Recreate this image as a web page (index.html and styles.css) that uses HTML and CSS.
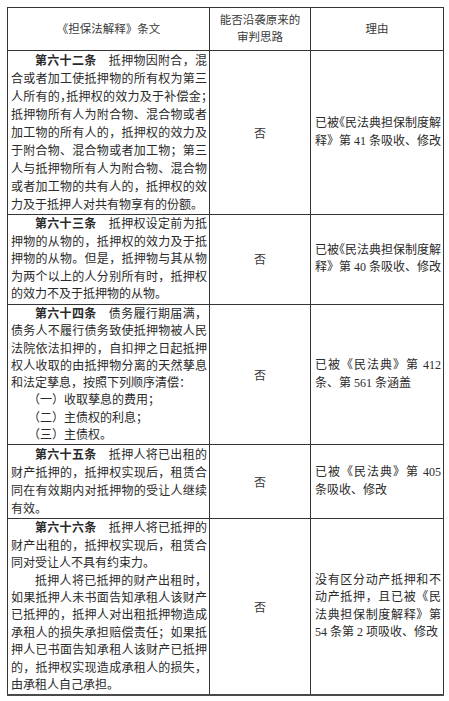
FILE: index.html
```html
<!DOCTYPE html>
<html lang="zh-CN">
<head>
<meta charset="utf-8">
<title>担保法解释条文对照</title>
<link rel="stylesheet" href="styles.css">
</head>
<body>
<table class="law">
<colgroup><col class="c1"><col class="c2"><col class="c3"></colgroup>
<thead>
<tr class="head">
<th>《担保法解释》条文</th>
<th>能否沿袭原来的<br>审判思路</th>
<th>理由</th>
</tr>
</thead>
<tbody>
<tr class="r1">
<td class="art">
<div class="ln ind"><b>第六十二条</b>　抵押物因附合，混</div>
<div class="ln">合或者加工使抵押物的所有权为第三</div>
<div class="ln halt">人所有的，抵押权的效力及于补偿金；</div>
<div class="ln">抵押物所有人为附合物、混合物或者</div>
<div class="ln">加工物的所有人的，抵押权的效力及</div>
<div class="ln">于附合物、混合物或者加工物；第三</div>
<div class="ln">人与抵押物所有人为附合物、混合物</div>
<div class="ln">或者加工物的共有人的，抵押权的效</div>
<div class="ln end">力及于抵押人对共有物享有的份额。</div>
</td>
<td class="ans">否</td>
<td class="why">
<div class="ln halt">已被《民法典担保制度解</div>
<div class="ln end">释》第 41 条吸收、修改</div>
</td>
</tr>
<tr class="r2">
<td class="art">
<div class="ln ind"><b>第六十三条</b>　抵押权设定前为抵</div>
<div class="ln">押物的从物的，抵押权的效力及于抵</div>
<div class="ln">押物的从物。但是，抵押物与其从物</div>
<div class="ln">为两个以上的人分别所有时，抵押权</div>
<div class="ln end">的效力不及于抵押物的从物。</div>
</td>
<td class="ans">否</td>
<td class="why">
<div class="ln halt">已被《民法典担保制度解</div>
<div class="ln end">释》第 40 条吸收、修改</div>
</td>
</tr>
<tr class="r3">
<td class="art">
<div class="ln ind"><b>第六十四条</b>　债务履行期届满，</div>
<div class="ln">债务人不履行债务致使抵押物被人民</div>
<div class="ln">法院依法扣押的，自扣押之日起抵押</div>
<div class="ln">权人收取的由抵押物分离的天然孳息</div>
<div class="ln end">和法定孳息，按照下列顺序清偿：</div>
<div class="ln end sub">（一）收取孳息的费用；</div>
<div class="ln end sub">（二）主债权的利息；</div>
<div class="ln end sub">（三）主债权。</div>
</td>
<td class="ans">否</td>
<td class="why">
<div class="ln">已被《民法典》第 412</div>
<div class="ln end">条、第 561 条涵盖</div>
</td>
</tr>
<tr class="r4">
<td class="art">
<div class="ln ind"><b>第六十五条</b>　抵押人将已出租的</div>
<div class="ln">财产抵押的，抵押权实现后，租赁合</div>
<div class="ln">同在有效期内对抵押物的受让人继续</div>
<div class="ln end">有效。</div>
</td>
<td class="ans">否</td>
<td class="why">
<div class="ln">已被《民法典》第 405</div>
<div class="ln end">条吸收、修改</div>
</td>
</tr>
<tr class="r5">
<td class="art">
<div class="ln ind"><b>第六十六条</b>　抵押人将已抵押的</div>
<div class="ln">财产出租的，抵押权实现后，租赁合</div>
<div class="ln end">同对受让人不具有约束力。</div>
<div class="ln ind">抵押人将已抵押的财产出租时，</div>
<div class="ln">如果抵押人未书面告知承租人该财产</div>
<div class="ln">已抵押的，抵押人对出租抵押物造成</div>
<div class="ln">承租人的损失承担赔偿责任；如果抵</div>
<div class="ln">押人已书面告知承租人该财产已抵押</div>
<div class="ln">的，抵押权实现造成承租人的损失，</div>
<div class="ln end">由承租人自己承担。</div>
</td>
<td class="ans">否</td>
<td class="why">
<div class="ln">没有区分动产抵押和不</div>
<div class="ln">动产抵押，且已被《民</div>
<div class="ln">法典担保制度解释》第</div>
<div class="ln end">54 条第 2 项吸收、修改</div>
</td>
</tr>
</tbody>
</table>
</body>
</html>
```

FILE: styles.css
```css
html, body {
  margin: 0;
  padding: 0;
  background: #ffffff;
}

body {
  font-family: "Liberation Serif", "Noto Sans CJK SC", serif;
  font-size: 12px;
  color: #2a2a2a;
}

.law {
  border-collapse: collapse;
  table-layout: fixed;
  width: 436px;
  margin: 7px 0 0 7px;
}

.c1 { width: 202px; }
.c2 { width: 101px; }
.c3 { width: 133px; }

.law th,
.law td {
  border: 1px solid #353535;
  padding: 0;
}

.law tbody tr:last-child td {
  border-bottom: 2px solid #4a4a4a;
}

.head th {
  height: 42px;
  font-family: "Liberation Sans", "Noto Sans CJK SC", sans-serif;
  font-weight: 400;
  font-size: 11.5px;
  line-height: 17px;
  color: #3a3a3a;
  text-align: center;
  vertical-align: middle;
}

.art {
  vertical-align: top;
  padding: 1px 2px 0 3px !important;
}

.ans {
  text-align: center;
  vertical-align: middle;
  color: #3a3a3a;
}

.why {
  vertical-align: middle;
  padding: 0 2px 0 4px !important;
  line-height: 17.5px;
}

.ln {
  white-space: nowrap;
  text-align: justify;
  text-align-last: justify;
}

.ln.end {
  text-align: left;
  text-align-last: left;
}

.ln.ind {
  padding-left: 24px;
}

.ln.sub {
  padding-left: 17px;
}

.halt {
  font-feature-settings: "halt";
}

.art b {
  font-weight: 700;
  color: #2a2a2a;
}

.r1 .art { line-height: 18px; }
.r2 .art { line-height: 17.6px; }
.r3 .art { line-height: 17.3px; }
.r4 .art { line-height: 18px; }
.r5 .art { line-height: 17.4px; }
```
